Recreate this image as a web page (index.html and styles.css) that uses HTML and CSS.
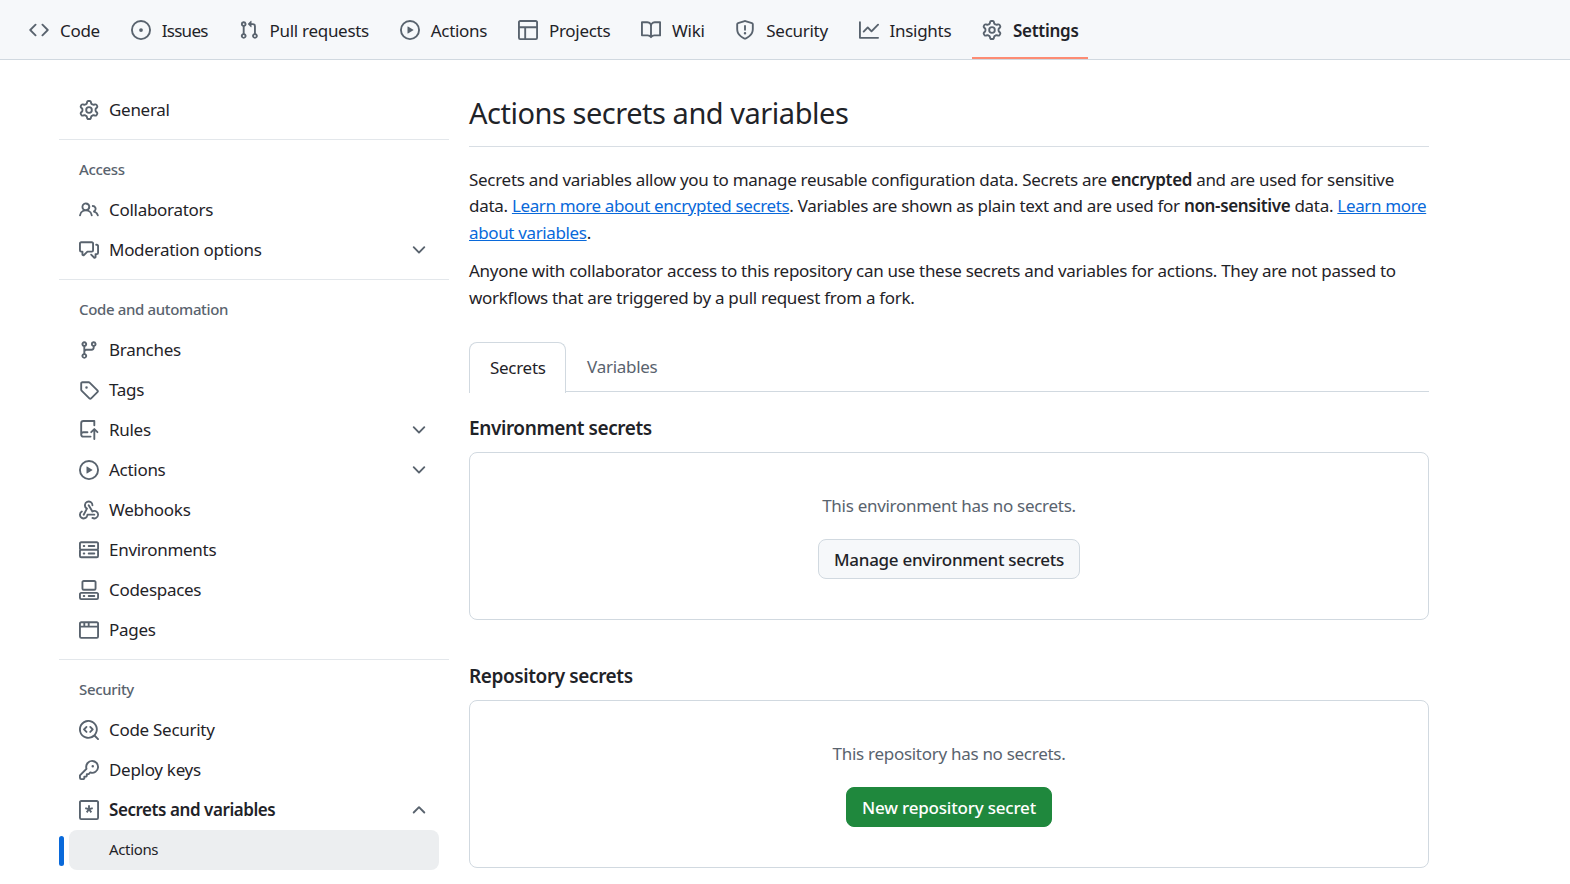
FILE: index.html
```html
<!DOCTYPE html>
<html lang="en">
<head>
    <meta charset="UTF-8">
    <title>Actions secrets and variables</title>
    <link rel="stylesheet" href="styles.css">
</head>
<body>
    <svg class="sprite" xmlns="http://www.w3.org/2000/svg">
        <symbol id="i-code" viewBox="0 0 16 16"><path d="m11.28 3.22 4.25 4.25a.75.75 0 0 1 0 1.06l-4.25 4.25a.749.749 0 0 1-1.275-.326.749.749 0 0 1 .215-.734L13.94 8l-3.72-3.72a.749.749 0 0 1 .326-1.275.749.749 0 0 1 .734.215Zm-6.56 0a.751.751 0 0 1 1.042.018.751.751 0 0 1 .018 1.042L2.06 8l3.72 3.72a.749.749 0 0 1-.326 1.275.749.749 0 0 1-.734-.215L.47 8.53a.75.75 0 0 1 0-1.06Z"/></symbol>
        <symbol id="i-issue" viewBox="0 0 16 16"><path d="M8 9.5a1.5 1.5 0 1 0 0-3 1.5 1.5 0 0 0 0 3Z"/><path d="M8 0a8 8 0 1 1 0 16A8 8 0 0 1 8 0ZM1.5 8a6.5 6.5 0 1 0 13 0 6.5 6.5 0 0 0-13 0Z"/></symbol>
        <symbol id="i-pr" viewBox="0 0 16 16"><path d="M1.5 3.25a2.25 2.25 0 1 1 3 2.122v5.256a2.251 2.251 0 1 1-1.5 0V5.372A2.25 2.25 0 0 1 1.5 3.25Zm5.677-.177L9.573.677A.25.25 0 0 1 10 .854V2.5h1A2.5 2.5 0 0 1 13.5 5v5.628a2.251 2.251 0 1 1-1.5 0V5a1 1 0 0 0-1-1h-1v1.646a.25.25 0 0 1-.427.177L7.177 3.427a.25.25 0 0 1 0-.354ZM3.75 2.5a.75.75 0 1 0 0 1.5.75.75 0 0 0 0-1.5Zm0 9.5a.75.75 0 1 0 0 1.5.75.75 0 0 0 0-1.5Zm8.25.75a.75.75 0 1 0 1.5 0 .75.75 0 0 0-1.5 0Z"/></symbol>
        <symbol id="i-play" viewBox="0 0 16 16"><path d="M8 0a8 8 0 1 1 0 16A8 8 0 0 1 8 0ZM1.5 8a6.5 6.5 0 1 0 13 0 6.5 6.5 0 0 0-13 0Zm4.879-2.773 4.264 2.559a.25.25 0 0 1 0 .428l-4.264 2.559A.25.25 0 0 1 6 10.559V5.442a.25.25 0 0 1 .379-.215Z"/></symbol>
        <symbol id="i-table" viewBox="0 0 16 16"><path d="M0 1.75C0 .784.784 0 1.75 0h12.5C15.216 0 16 .784 16 1.75v12.5A1.75 1.75 0 0 1 14.25 16H1.75A1.75 1.75 0 0 1 0 14.25ZM6.5 6.5v8h7.75a.25.25 0 0 0 .25-.25V6.5Zm8-1.5V1.75a.25.25 0 0 0-.25-.25H1.75a.25.25 0 0 0-.25.25V5Zm-13 1.5v7.75c0 .138.112.25.25.25H5v-8Z"/></symbol>
        <symbol id="i-book" viewBox="0 0 16 16"><path d="M0 1.75A.75.75 0 0 1 .75 1h4.253c1.227 0 2.317.59 3 1.501A3.743 3.743 0 0 1 11.006 1h4.245a.75.75 0 0 1 .75.75v10.5a.75.75 0 0 1-.75.75h-4.507a2.25 2.25 0 0 0-1.591.659l-.622.621a.75.75 0 0 1-1.06 0l-.622-.621A2.25 2.25 0 0 0 5.258 13H.75a.75.75 0 0 1-.75-.75Zm7.251 10.324.004-5.073-.002-2.253A2.25 2.25 0 0 0 5.003 2.5H1.5v9h3.757a3.75 3.75 0 0 1 1.994.574ZM8.755 4.75l-.004 7.322a3.752 3.752 0 0 1 1.992-.572H14.5v-9h-3.495a2.25 2.25 0 0 0-2.25 2.25Z"/></symbol>
        <symbol id="i-shield" viewBox="0 0 16 16"><path d="M7.467.133a1.748 1.748 0 0 1 1.066 0l5.25 1.68A1.75 1.75 0 0 1 15 3.48V7c0 1.566-.32 3.182-1.303 4.682-.983 1.498-2.585 2.813-5.032 3.855a1.697 1.697 0 0 1-1.33 0c-2.447-1.042-4.049-2.357-5.032-3.855C1.32 10.182 1 8.566 1 7V3.48a1.75 1.75 0 0 1 1.217-1.667Zm.61 1.429a.25.25 0 0 0-.153 0l-5.25 1.68a.25.25 0 0 0-.174.238V7c0 1.358.275 2.666 1.057 3.86.784 1.194 2.121 2.34 4.366 3.297a.196.196 0 0 0 .154 0c2.245-.956 3.582-2.104 4.366-3.298C13.225 9.666 13.5 8.36 13.5 7V3.48a.251.251 0 0 0-.174-.237l-5.25-1.68ZM8.75 4.75v3a.75.75 0 0 1-1.5 0v-3a.75.75 0 0 1 1.5 0ZM9 10.5a1 1 0 1 1-2 0 1 1 0 0 1 2 0Z"/></symbol>
        <symbol id="i-graph" viewBox="0 0 16 16"><path d="M1.5 1.75V13.5h13.75a.75.75 0 0 1 0 1.5H.75a.75.75 0 0 1-.75-.75V1.75a.75.75 0 0 1 1.5 0Zm14.28 2.53-5.25 5.25a.75.75 0 0 1-1.06 0L7 7.06 4.28 9.78a.751.751 0 0 1-1.042-.018.751.751 0 0 1-.018-1.042l3.25-3.25a.75.75 0 0 1 1.06 0L10 7.94l4.72-4.72a.751.751 0 0 1 1.042.018.751.751 0 0 1 .018 1.042Z"/></symbol>
        <symbol id="i-gear" viewBox="0 0 16 16"><path d="M8 0a8.2 8.2 0 0 1 .701.031C9.444.095 9.99.645 10.16 1.29l.288 1.107c.018.066.079.158.212.224.231.114.454.243.668.386.123.082.233.09.299.071l1.103-.303c.644-.176 1.392.021 1.82.63.27.385.506.792.704 1.218.315.675.111 1.422-.364 1.891l-.814.806c-.049.048-.098.147-.088.294.016.257.016.515 0 .772-.01.147.038.246.088.294l.814.806c.475.469.679 1.216.364 1.891a7.977 7.977 0 0 1-.704 1.217c-.428.61-1.176.807-1.82.63l-1.102-.302c-.067-.019-.177-.011-.3.071a5.909 5.909 0 0 1-.668.386c-.133.066-.194.158-.211.224l-.29 1.106c-.168.646-.715 1.196-1.458 1.26a8.006 8.006 0 0 1-1.402 0c-.743-.064-1.289-.614-1.458-1.26l-.289-1.106c-.018-.066-.079-.158-.212-.224a5.738 5.738 0 0 1-.668-.386c-.123-.082-.233-.09-.299-.071l-1.103.303c-.644.176-1.392-.021-1.82-.63a8.12 8.12 0 0 1-.704-1.218c-.315-.675-.111-1.422.363-1.891l.815-.806c.05-.048.098-.147.088-.294a6.214 6.214 0 0 1 0-.772c.01-.147-.038-.246-.088-.294l-.815-.806C.635 6.045.431 5.298.746 4.623a7.92 7.92 0 0 1 .704-1.217c.428-.61 1.176-.807 1.82-.63l1.102.302c.067.019.177.011.3-.071.214-.143.437-.272.668-.386.133-.066.194-.158.211-.224l.29-1.106C6.009.645 6.556.095 7.299.03 7.53.01 7.764 0 8 0Zm-.571 1.525c-.036.003-.108.036-.137.146l-.289 1.105c-.147.561-.549.967-.998 1.189-.173.086-.34.183-.5.29-.417.278-.97.423-1.529.27l-1.103-.303c-.109-.03-.175.016-.195.045-.22.312-.412.644-.573.99-.014.031-.021.11.059.19l.815.806c.411.406.562.957.53 1.456a4.709 4.709 0 0 0 0 .582c.032.499-.119 1.05-.53 1.456l-.815.806c-.081.08-.073.159-.059.19.162.346.353.677.573.989.02.03.085.076.195.046l1.102-.303c.56-.153 1.113-.008 1.53.27.161.107.328.204.501.29.447.222.85.629.997 1.189l.289 1.105c.029.109.101.143.137.146a6.6 6.6 0 0 0 1.142 0c.036-.003.108-.036.137-.146l.289-1.105c.147-.561.549-.967.998-1.189.173-.086.34-.183.5-.29.417-.278.97-.423 1.529-.27l1.103.303c.109.029.175-.016.195-.045.22-.313.411-.644.573-.99.014-.031.021-.11-.059-.19l-.815-.806c-.411-.406-.562-.957-.53-1.456a4.709 4.709 0 0 0 0-.582c-.032-.499.119-1.05.53-1.456l.815-.806c.081-.08.073-.159.059-.19a6.464 6.464 0 0 0-.573-.989c-.02-.03-.085-.076-.195-.046l-1.102.303c-.56.153-1.113.008-1.53-.27a4.44 4.44 0 0 0-.501-.29c-.447-.222-.85-.629-.997-1.189l-.289-1.105c-.029-.11-.101-.143-.137-.146a6.6 6.6 0 0 0-1.142 0ZM11 8a3 3 0 1 1-6 0 3 3 0 0 1 6 0ZM9.5 8a1.5 1.5 0 1 0-3.001.001A1.5 1.5 0 0 0 9.5 8Z"/></symbol>
        <symbol id="i-people" viewBox="0 0 16 16"><path d="M2 5.5a3.5 3.5 0 1 1 5.898 2.549 5.508 5.508 0 0 1 3.034 4.084.75.75 0 1 1-1.482.235 4 4 0 0 0-7.9 0 .75.75 0 0 1-1.482-.236A5.507 5.507 0 0 1 3.102 8.05 3.493 3.493 0 0 1 2 5.5ZM11 4a3.001 3.001 0 0 1 2.22 5.018 5.01 5.01 0 0 1 2.56 3.012.749.749 0 0 1-.885.954.752.752 0 0 1-.549-.514 3.507 3.507 0 0 0-2.522-2.372.75.75 0 0 1-.574-.73v-.352a.75.75 0 0 1 .416-.672A1.5 1.5 0 0 0 11 5.5.75.75 0 0 1 11 4Zm-5.5-.5a2 2 0 1 0-.001 3.999A2 2 0 0 0 5.5 3.5Z"/></symbol>
        <symbol id="i-discussion" viewBox="0 0 16 16"><path d="M1.75 1h8.5c.966 0 1.75.784 1.75 1.75v5.5A1.75 1.75 0 0 1 10.25 10H7.061l-2.574 2.573A1.458 1.458 0 0 1 2 11.543V10h-.25A1.75 1.75 0 0 1 0 8.25v-5.5C0 1.784.784 1 1.75 1ZM1.5 2.75v5.5c0 .138.112.25.25.25h1a.75.75 0 0 1 .75.75v2.19l2.72-2.72a.749.749 0 0 1 .53-.22h3.5a.25.25 0 0 0 .25-.25v-5.5a.25.25 0 0 0-.25-.25h-8.5a.25.25 0 0 0-.25.25Zm13 2a.25.25 0 0 0-.25-.25h-.5a.75.75 0 0 1 0-1.5h.5c.966 0 1.75.784 1.75 1.75v5.5A1.75 1.75 0 0 1 14.25 12H14v1.543a1.458 1.458 0 0 1-2.487 1.03L9.22 12.28a.749.749 0 0 1 .326-1.275.749.749 0 0 1 .734.215l2.22 2.22v-2.19a.75.75 0 0 1 .75-.75h1a.25.25 0 0 0 .25-.25Z"/></symbol>
        <symbol id="i-branch" viewBox="0 0 16 16"><path d="M9.5 3.25a2.25 2.25 0 1 1 3 2.122V6A2.5 2.5 0 0 1 10 8.5H6a1 1 0 0 0-1 1v1.128a2.251 2.251 0 1 1-1.5 0V5.372a2.25 2.25 0 1 1 1.5 0v1.836A2.493 2.493 0 0 1 6 7h4a1 1 0 0 0 1-1v-.628A2.25 2.25 0 0 1 9.5 3.25Zm-6 0a.75.75 0 1 0 1.5 0 .75.75 0 0 0-1.5 0Zm8.25-.75a.75.75 0 1 0 0 1.5.75.75 0 0 0 0-1.5ZM4.25 12a.75.75 0 1 0 0 1.5.75.75 0 0 0 0-1.5Z"/></symbol>
        <symbol id="i-tag" viewBox="0 0 16 16"><path d="M1 7.775V2.75C1 1.784 1.784 1 2.75 1h5.025c.464 0 .91.184 1.238.513l6.25 6.25a1.75 1.75 0 0 1 0 2.474l-5.026 5.026a1.75 1.75 0 0 1-2.474 0l-6.25-6.25A1.752 1.752 0 0 1 1 7.775Zm1.5 0c0 .066.026.13.073.177l6.25 6.25a.25.25 0 0 0 .354 0l5.025-5.025a.25.25 0 0 0 0-.354l-6.25-6.25a.25.25 0 0 0-.177-.073H2.75a.25.25 0 0 0-.25.25ZM6 5a1 1 0 1 1 0 2 1 1 0 0 1 0-2Z"/></symbol>
        <symbol id="i-rules" viewBox="0 0 16 16"><path d="M1 2.5A2.5 2.5 0 0 1 3.5 0h8.75a.75.75 0 0 1 .75.75v3.5a.75.75 0 0 1-1.5 0V1.5h-8a1 1 0 0 0-1 1v6.708A2.493 2.493 0 0 1 3.5 9h3.25a.75.75 0 0 1 0 1.5H3.5a1 1 0 0 0 0 2h5.75a.75.75 0 0 1 0 1.5H3.5A2.5 2.5 0 0 1 1 11.5Zm13.23 7.79h-.001l-1.224-1.224v6.184a.75.75 0 0 1-1.5 0V9.066L10.28 10.29a.75.75 0 0 1-1.06-1.061l2.505-2.504a.75.75 0 0 1 1.06 0L15.29 9.23a.751.751 0 0 1-.018 1.042.751.751 0 0 1-1.042.018Z"/></symbol>
        <symbol id="i-webhook" viewBox="0 0 16 16"><path d="M5.5 4.25a2.25 2.25 0 0 1 4.5 0 .75.75 0 0 0 1.5 0 3.75 3.75 0 1 0-6.14 2.889l-2.272 4.258a.75.75 0 0 0 1.324.706L7 7.25a.75.75 0 0 0-.309-1.015A2.25 2.25 0 0 1 5.5 4.25Z"/><path d="M7.364 3.607a.75.75 0 0 1 1.03.257l2.608 4.349a3.75 3.75 0 1 1-.628 6.785.75.75 0 0 1 .752-1.299 2.25 2.25 0 1 0-.033-3.88.75.75 0 0 1-1.03-.256L7.107 4.636a.75.75 0 0 1 .257-1.03Z"/><path d="M2.9 8.776A.75.75 0 0 1 2.625 9.8 2.25 2.25 0 1 0 6 11.75a.75.75 0 0 1 .75-.751h5.5a.75.75 0 0 1 0 1.5H7.425a3.751 3.751 0 1 1-5.55-3.998.75.75 0 0 1 1.024.274Z"/></symbol>
        <symbol id="i-server" viewBox="0 0 16 16"><path d="M1.75 1h12.5c.966 0 1.75.784 1.75 1.75v4c0 .372-.116.717-.314 1 .198.283.314.628.314 1v4a1.75 1.75 0 0 1-1.75 1.75H1.75A1.75 1.75 0 0 1 0 12.75v-4c0-.372.116-.717.314-1a1.739 1.739 0 0 1-.314-1v-4C0 1.784.784 1 1.75 1ZM1.5 2.75v4c0 .138.112.25.25.25h12.5a.25.25 0 0 0 .25-.25v-4a.25.25 0 0 0-.25-.25H1.75a.25.25 0 0 0-.25.25Zm.25 5.75a.25.25 0 0 0-.25.25v4c0 .138.112.25.25.25h12.5a.25.25 0 0 0 .25-.25v-4a.25.25 0 0 0-.25-.25ZM7 4.75A.75.75 0 0 1 7.75 4h4.5a.75.75 0 0 1 0 1.5h-4.5A.75.75 0 0 1 7 4.75ZM7.75 10h4.5a.75.75 0 0 1 0 1.5h-4.5a.75.75 0 0 1 0-1.5ZM3 4.75A.75.75 0 0 1 3.75 4h.5a.75.75 0 0 1 0 1.5h-.5A.75.75 0 0 1 3 4.75ZM3.75 10h.5a.75.75 0 0 1 0 1.5h-.5a.75.75 0 0 1 0-1.5Z"/></symbol>
        <symbol id="i-codespaces" viewBox="0 0 16 16"><path d="M0 11.25c0-.966.784-1.75 1.75-1.75h12.5c.966 0 1.75.784 1.75 1.75v3A1.75 1.75 0 0 1 14.25 16H1.75A1.75 1.75 0 0 1 0 14.25Zm2-9.5C2 .784 2.784 0 3.75 0h8.5C13.216 0 14 .784 14 1.75v5a1.75 1.75 0 0 1-1.75 1.75h-8.5A1.75 1.75 0 0 1 2 6.75Zm1.75-.25a.25.25 0 0 0-.25.25v5c0 .138.112.25.25.25h8.5a.25.25 0 0 0 .25-.25v-5a.25.25 0 0 0-.25-.25Zm-2 9.5a.25.25 0 0 0-.25.25v3c0 .138.112.25.25.25h12.5a.25.25 0 0 0 .25-.25v-3a.25.25 0 0 0-.25-.25Z"/><path d="M7 12.75a.75.75 0 0 1 .75-.75h4.5a.75.75 0 0 1 0 1.5h-4.5a.75.75 0 0 1-.75-.75Zm-4 0a.75.75 0 0 1 .75-.75h.5a.75.75 0 0 1 0 1.5h-.5a.75.75 0 0 1-.75-.75Z"/></symbol>
        <symbol id="i-browser" viewBox="0 0 16 16"><path d="M0 2.75C0 1.784.784 1 1.75 1h12.5c.966 0 1.75.784 1.75 1.75v10.5A1.75 1.75 0 0 1 14.25 15H1.75A1.75 1.75 0 0 1 0 13.25ZM14.5 6h-13v7.25c0 .138.112.25.25.25h12.5a.25.25 0 0 0 .25-.25Zm-6-3.5v2h6v-1.75a.25.25 0 0 0-.25-.25ZM5 2.5v2h2v-2Zm-3.25 0a.25.25 0 0 0-.25.25V4.5h2v-2Z"/></symbol>
        <symbol id="i-codescan" viewBox="0 0 16 16"><path d="M8.47 4.97a.75.75 0 0 0 0 1.06L9.94 7.5 8.47 8.97a.75.75 0 1 0 1.06 1.06l2-2a.75.75 0 0 0 0-1.06l-2-2a.75.75 0 0 0-1.06 0ZM6.53 6.03a.75.75 0 0 0-1.06-1.06l-2 2a.75.75 0 0 0 0 1.06l2 2a.75.75 0 1 0 1.06-1.06L5.06 7.5l1.47-1.47Z"/><path d="M12.246 13.307a7.501 7.501 0 1 1 1.06-1.06l2.474 2.473a.749.749 0 0 1-.326 1.275.749.749 0 0 1-.734-.215ZM1.5 7.5a6.002 6.002 0 0 0 3.608 5.504 6.002 6.002 0 0 0 6.486-1.117.748.748 0 0 1 .292-.293A6 6 0 1 0 1.5 7.5Z"/></symbol>
        <symbol id="i-key" viewBox="0 0 16 16"><path d="M10.5 0a5.499 5.499 0 1 1-1.288 10.848l-.932.932a.749.749 0 0 1-.53.22H7v.75a.749.749 0 0 1-.22.53l-.5.5a.749.749 0 0 1-.53.22H5v.75a.749.749 0 0 1-.22.53l-.5.5a.749.749 0 0 1-.53.22h-2A1.75 1.75 0 0 1 0 14.25v-2c0-.199.079-.389.22-.53l4.932-4.932A5.5 5.5 0 0 1 10.5 0Zm-4 5.5c-.001.431.069.86.205 1.269a.75.75 0 0 1-.181.768L1.5 12.56v1.69c0 .138.112.25.25.25h1.69l.06-.06v-1.19a.75.75 0 0 1 .75-.75h1.19l.06-.06v-1.19a.75.75 0 0 1 .75-.75h1.19l1.023-1.025a.75.75 0 0 1 .768-.18A4 4 0 1 0 6.5 5.5ZM11 6a1 1 0 1 1 0-2 1 1 0 0 1 0 2Z"/></symbol>
        <symbol id="i-asterisk" viewBox="0 0 16 16"><path d="M0 1.75C0 .784.784 0 1.75 0h12.5C15.216 0 16 .784 16 1.75v12.5A1.75 1.75 0 0 1 14.25 16H1.75A1.75 1.75 0 0 1 0 14.25Zm1.75-.25a.25.25 0 0 0-.25.25v12.5c0 .138.112.25.25.25h12.5a.25.25 0 0 0 .25-.25V1.75a.25.25 0 0 0-.25-.25Zm7 2.75v2.1l2-.65.46 1.43-2 .65 1.24 1.7-1.22.88L8 8.66l-1.24 1.7-1.21-.88 1.23-1.7-2-.65.46-1.43 2 .65v-2.1Z"/></symbol>
        <symbol id="i-down" viewBox="0 0 16 16"><path d="M12.78 5.22a.749.749 0 0 1 0 1.06l-4.25 4.25a.749.749 0 0 1-1.06 0L3.22 6.28a.749.749 0 1 1 1.06-1.06L8 8.939l3.72-3.719a.749.749 0 0 1 1.06 0Z"/></symbol>
        <symbol id="i-up" viewBox="0 0 16 16"><path d="M3.22 10.53a.749.749 0 0 1 0-1.06l4.25-4.25a.749.749 0 0 1 1.06 0l4.25 4.25a.749.749 0 1 1-1.06 1.06L8 6.811 4.28 10.53a.749.749 0 0 1-1.06 0Z"/></symbol>
    </svg>

    <nav class="repo-nav">
        <a class="repo-tab"><svg class="icon"><use href="#i-code"/></svg>Code</a>
        <a class="repo-tab tight"><svg class="icon"><use href="#i-issue"/></svg>Issues</a>
        <a class="repo-tab"><svg class="icon"><use href="#i-pr"/></svg>Pull requests</a>
        <a class="repo-tab"><svg class="icon"><use href="#i-play"/></svg>Actions</a>
        <a class="repo-tab"><svg class="icon"><use href="#i-table"/></svg>Projects</a>
        <a class="repo-tab"><svg class="icon"><use href="#i-book"/></svg>Wiki</a>
        <a class="repo-tab"><svg class="icon"><use href="#i-shield"/></svg>Security</a>
        <a class="repo-tab"><svg class="icon"><use href="#i-graph"/></svg>Insights</a>
        <a class="repo-tab selected"><svg class="icon"><use href="#i-gear"/></svg>Settings</a>
    </nav>

    <div class="layout">
        <aside class="sidebar">
            <ul class="side-group">
                <li class="side-item"><svg class="icon"><use href="#i-gear"/></svg>General</li>
            </ul>
            <ul class="side-group">
                <li class="side-heading">Access</li>
                <li class="side-item"><svg class="icon"><use href="#i-people"/></svg>Collaborators</li>
                <li class="side-item"><svg class="icon"><use href="#i-discussion"/></svg>Moderation options<svg class="chevron"><use href="#i-down"/></svg></li>
            </ul>
            <ul class="side-group">
                <li class="side-heading">Code and automation</li>
                <li class="side-item"><svg class="icon"><use href="#i-branch"/></svg>Branches</li>
                <li class="side-item"><svg class="icon"><use href="#i-tag"/></svg>Tags</li>
                <li class="side-item"><svg class="icon"><use href="#i-rules"/></svg>Rules<svg class="chevron"><use href="#i-down"/></svg></li>
                <li class="side-item"><svg class="icon"><use href="#i-play"/></svg>Actions<svg class="chevron"><use href="#i-down"/></svg></li>
                <li class="side-item"><svg class="icon"><use href="#i-webhook"/></svg>Webhooks</li>
                <li class="side-item"><svg class="icon"><use href="#i-server"/></svg>Environments</li>
                <li class="side-item"><svg class="icon"><use href="#i-codespaces"/></svg>Codespaces</li>
                <li class="side-item"><svg class="icon"><use href="#i-browser"/></svg>Pages</li>
            </ul>
            <ul class="side-group">
                <li class="side-heading">Security</li>
                <li class="side-item"><svg class="icon"><use href="#i-codescan"/></svg>Code Security</li>
                <li class="side-item"><svg class="icon"><use href="#i-key"/></svg>Deploy keys</li>
                <li class="side-item strong"><svg class="icon"><use href="#i-asterisk"/></svg>Secrets and variables<svg class="chevron"><use href="#i-up"/></svg></li>
                <li class="side-sub">Actions</li>
            </ul>
        </aside>

        <main class="content">
            <h1 class="page-title">Actions secrets and variables</h1>
            <p class="intro">Secrets and variables allow you to manage reusable configuration data. Secrets are <b>encrypted</b> and are used for sensitive<br>data. <a href="#">Learn more about encrypted secrets</a>. Variables are shown as plain text and are used for <b>non-sensitive</b> data. <a href="#">Learn more<br>about variables</a>.</p>
            <p class="intro">Anyone with collaborator access to this repository can use these secrets and variables for actions. They are not passed to<br>workflows that are triggered by a pull request from a fork.</p>

            <div class="tabs">
                <span class="tab active">Secrets</span>
                <span class="tab">Variables</span>
            </div>

            <h2 class="section-title">Environment secrets</h2>
            <section class="blank">
                <p class="blank-text">This environment has no secrets.</p>
                <button class="btn">Manage environment secrets</button>
            </section>

            <h2 class="section-title repo">Repository secrets</h2>
            <section class="blank">
                <p class="blank-text">This repository has no secrets.</p>
                <button class="btn green">New repository secret</button>
            </section>
        </main>
    </div>
</body>
</html>
```

FILE: styles.css
```css
html, body {
    height: 884px;
    overflow: hidden;
}
body {
    margin: 0;
    background: #fff;
    color: #1f2328;
    font-family: "Noto Sans", "Open Sans", sans-serif;
    font-size: 17px;
    letter-spacing: -0.29px;
}
.sprite {
    display: none;
}
.icon {
    width: 20px;
    height: 20px;
    flex: none;
    fill: #59636e;
}
.chevron {
    width: 20px;
    height: 20px;
    margin-left: auto;
    fill: #59636e;
}

/* top tabs */
.repo-nav {
    display: flex;
    gap: 10.75px;
    height: 59px;
    padding-left: 19px;
    background: #f6f8fa;
    border-bottom: 1px solid #d1d9e0;
}
.repo-tab {
    display: flex;
    align-items: center;
    gap: 11px;
    padding: 3px 10px 0;
    border-bottom: 2px solid transparent;
    box-sizing: border-box;
    height: 59px;
    white-space: nowrap;
}
.repo-tab.tight {
    letter-spacing: -0.7px;
}
.repo-tab .icon {
    margin-bottom: 1px;
}
.repo-tab.selected {
    font-weight: 600;
    border-bottom-color: #fd8c73;
}

.layout {
    display: flex;
    padding-left: 59px;
}

/* left menu */
.sidebar {
    width: 390px;
    flex: none;
    padding-top: 30px;
}
.side-group {
    list-style: none;
    margin: 0 0 10px;
    padding: 0 0 9px;
    border-bottom: 1px solid #e3e7eb;
}
.side-group:last-child {
    border-bottom: 0;
}
.side-heading {
    height: 40px;
    line-height: 39px;
    padding-left: 20px;
    font-size: 15px;
    font-weight: 500;
    letter-spacing: -0.35px;
    color: #59636e;
}
.side-item {
    display: flex;
    align-items: center;
    gap: 10px;
    height: 38px;
    padding: 0 20px 2px;
    width: 350px;
}
.side-item svg {
    margin-top: 2px;
}
.side-item.strong {
    font-weight: 600;
    letter-spacing: -0.44px;
}
.side-sub {
    position: relative;
    height: 40px;
    line-height: 39px;
    margin-left: 10px;
    padding-left: 40px;
    width: 330px;
    background: #eceef0;
    border-radius: 8px;
    font-size: 15px;
    letter-spacing: -0.35px;
}
.side-sub::before {
    content: "";
    position: absolute;
    left: -10px;
    top: 6px;
    width: 5px;
    height: 30px;
    background: #0969da;
    border-radius: 3px;
}

/* main column */
.content {
    width: 960px;
    margin-left: 20px;
    flex: none;
}
.page-title {
    margin: 0;
    padding: 32px 0 11px;
    height: 43px;
    line-height: 42px;
    font-size: 29px;
    font-weight: 400;
    letter-spacing: -0.47px;
    border-bottom: 1px solid #d8dee4;
}
.intro {
    margin: 0 0 12.5px;
    line-height: 26.25px;
    white-space: nowrap;
}
.page-title + .intro {
    margin-top: 20px;
}
.intro a {
    color: #0969da;
    letter-spacing: -0.36px;
}
.intro b {
    font-weight: 600;
    letter-spacing: -0.35px;
}
.tabs {
    display: flex;
    height: 49px;
    margin-top: 31.5px;
    border-bottom: 1px solid #d1d9e0;
}
.tab {
    padding: 0 20px 0 21px;
    line-height: 50px;
    color: #59636e;
}
.tab.active {
    padding: 0 19.5px 0 20px;
    color: #1f2328;
    background: #fff;
    border: 1px solid #d1d9e0;
    border-bottom: 0;
    border-radius: 8px 8px 0 0;
    height: 50px;
}
.section-title {
    margin: 22px 0 10px;
    font-size: 19px;
    letter-spacing: -0.4px;
    line-height: 28px;
    font-weight: 600;
}
.section-title.repo {
    margin-top: 42px;
}
.blank {
    display: flex;
    flex-direction: column;
    align-items: center;
    height: 166px;
    border: 1px solid #d1d9e0;
    border-radius: 8px;
}
.blank-text {
    margin: 40px 0 20px;
    line-height: 26px;
    color: #59636e;
}
.btn {
    height: 40px;
    padding: 0 15.5px;
    font: inherit;
    font-weight: 500;
    letter-spacing: inherit;
    color: #1f2328;
    background: #f6f8fa;
    border: 1px solid #d1d9e0;
    border-radius: 8px;
}
.btn.green {
    padding: 0 15px;
    letter-spacing: -0.2px;
    color: #fff;
    background: #1f883d;
    border-color: #1f883d;
}
```
